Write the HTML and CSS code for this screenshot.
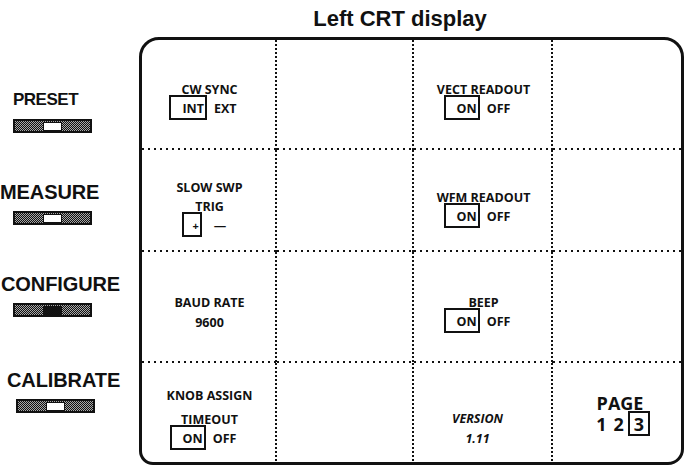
FILE: index.html
```html
<!DOCTYPE html>
<html>
<head>
<meta charset="utf-8">
<link rel="stylesheet" href="styles.css">
</head>
<body>
<div class="page">
  <div class="side">
    <div class="key k-preset"><div class="key-label">PRESET</div><div class="switch"><span class="win"></span></div></div>
    <div class="key k-measure"><div class="key-label">MEASURE</div><div class="switch"><span class="win"></span></div></div>
    <div class="key k-configure"><div class="key-label">CONFIGURE</div><div class="switch"><span class="win on"></span></div></div>
    <div class="key k-calibrate"><div class="key-label">CALIBRATE</div><div class="switch"><span class="win"></span></div></div>
  </div>
  <div class="main">
    <h1 class="title">Left CRT display</h1>
    <div class="crt">
      <div class="cell r1"><div class="lbl">CW SYNC</div><div class="opt"><span class="box">INT</span><span class="alt">EXT</span></div></div>
      <div class="cell"></div>
      <div class="cell r1"><div class="lbl">VECT READOUT</div><div class="opt"><span class="box">ON</span><span class="alt">OFF</span></div></div>
      <div class="cell"></div>

      <div class="cell r2a"><div class="lbl">SLOW SWP</div><div class="lbl sp6">TRIG</div><div class="opt"><span class="box tall">+</span><span class="alt dash">—</span></div></div>
      <div class="cell"></div>
      <div class="cell r2b"><div class="lbl">WFM READOUT</div><div class="opt"><span class="box">ON</span><span class="alt">OFF</span></div></div>
      <div class="cell"></div>

      <div class="cell r3"><div class="lbl">BAUD RATE</div><div class="lbl sp7">9600</div></div>
      <div class="cell"></div>
      <div class="cell r3"><div class="lbl">BEEP</div><div class="opt"><span class="box">ON</span><span class="alt">OFF</span></div></div>
      <div class="cell"></div>

      <div class="cell r4a"><div class="lbl">KNOB ASSIGN</div><div class="lbl sp11">TIMEOUT</div><div class="opt"><span class="box">ON</span><span class="alt">OFF</span></div></div>
      <div class="cell"></div>
      <div class="cell r4b"><div class="lbl ital">VERSION</div><div class="lbl ital sp7">1.11</div></div>
      <div class="cell r4c"><div class="page-lbl">PAGE</div><div class="pages"><span>1</span><span>2</span><span class="pbox">3</span></div></div>
    </div>
  </div>
</div>
</body>
</html>
```
FILE: styles.css
```css
html, body {
  margin: 0;
  padding: 0;
  background: #fff;
}
body {
  width: 686px;
  height: 467px;
  overflow: hidden;
  color: #111;
  font-family: "Liberation Sans", Arial, sans-serif;
}
.page {
  display: flex;
  height: 467px;
}
.side {
  width: 139px;
  flex: none;
  display: flex;
  flex-direction: column;
  align-items: flex-start;
  gap: 49px;
  padding-top: 90px;
  box-sizing: border-box;
}
.key {
  display: flex;
  flex-direction: column;
  align-items: flex-start;
}
.key-label {
  font-size: 20px;
  font-weight: 700;
  line-height: 20px;
  letter-spacing: -0.1px;
}
.k-preset .key-label {
  margin-left: 13px;
  font-size: 17px;
  letter-spacing: -0.5px;
}
.k-measure .key-label { margin-left: 0; }
.k-configure .key-label { margin-left: 1px; }
.k-calibrate .key-label { margin-left: 7px; }
.k-calibrate { margin-top: 4px; }
.switch {
  margin-top: 9px;
  margin-left: 13px;
  width: 79px;
  height: 14px;
  box-sizing: border-box;
  border: 2px solid #111;
  background: repeating-conic-gradient(#111 0 25%, #a8a8a8 0 50%) 0 0 / 2px 2px;
  display: flex;
  align-items: center;
  justify-content: center;
}
.k-calibrate .switch { margin-left: 16px; }
.win {
  width: 19px;
  height: 9px;
  box-sizing: border-box;
  background: #fff;
  border: 1px solid #111;
}
.win.on {
  background: #111;
}
.main {
  flex: 1;
  display: flex;
  flex-direction: column;
}
.title {
  margin: 0;
  height: 37px;
  line-height: 37px;
  font-size: 22px;
  font-weight: 700;
  text-align: center;
  padding-right: 25px;
}
.crt {
  width: 545px;
  height: 428px;
  box-sizing: border-box;
  border: 3px solid #111;
  border-radius: 20px 20px 16px 14px;
  display: grid;
  grid-template-columns: 135px 137px 139px 128px;
  grid-template-rows: 110px 102px 111px 99px;
}
.cell {
  display: flex;
  flex-direction: column;
  align-items: center;
  box-sizing: border-box;
  font-family: "Open Sans", "DejaVu Sans", sans-serif;
  font-weight: 700;
  font-size: 12.5px;
  background-image: linear-gradient(#111 2px, transparent 2px), linear-gradient(90deg, #111 2px, transparent 2px);
  background-size: 2px 4px, 6px 2px;
  background-position: right top, left bottom;
  background-repeat: repeat-y, repeat-x;
}
.cell:nth-child(4n) {
  background-image: linear-gradient(90deg, #111 2px, transparent 2px);
  background-size: 6px 2px;
  background-position: left bottom;
  background-repeat: repeat-x;
}
.cell:nth-child(n+13) {
  background-image: linear-gradient(#111 2px, transparent 2px);
  background-size: 2px 4px;
  background-position: right top;
  background-repeat: repeat-y;
}
.cell:nth-child(16) {
  background: none;
}
.r1 { padding-top: 43px; }
.r2a { padding-top: 31px; }
.r2b { padding-top: 41px; }
.r3 { padding-top: 44px; }
.r4a { padding-top: 26px; }
.r4b { padding-top: 49px; padding-right: 12px; }
.r4c { padding-top: 33px; padding-left: 6px; }
.lbl {
  line-height: 13px;
  white-space: nowrap;
}
.sp6 { margin-top: 6px; }
.sp7 { margin-top: 7px; }
.sp11 { margin-top: 11px; }
.ital { font-style: italic; }
.opt {
  display: flex;
  align-items: center;
  margin-top: -1px;
}
.box {
  height: 25px;
  box-sizing: border-box;
  border: 2px solid #111;
  padding: 2px 1px 0 11px;
  margin-left: -13px;
  display: flex;
  align-items: center;
  line-height: 13px;
}
.box.tall {
  padding-left: 9px;
  margin-left: -11px;
  width: 20px;
  justify-content: flex-end;
  font-size: 11px;
}
.alt {
  margin-left: 7px;
  padding-top: 2px;
  line-height: 13px;
}
.alt.dash {
  margin-left: 12px;
  font-weight: 700;
}
.page-lbl {
  font-size: 18px;
  line-height: 14px;
}
.pages {
  margin-top: 1px;
  display: flex;
  align-items: center;
  gap: 7px;
  font-size: 18px;
  line-height: 16px;
  margin-left: 6px;
}
.pbox {
  width: 22px;
  height: 25px;
  box-sizing: border-box;
  border: 2px solid #111;
  display: flex;
  align-items: center;
  justify-content: center;
  margin-left: -3px;
}
```
